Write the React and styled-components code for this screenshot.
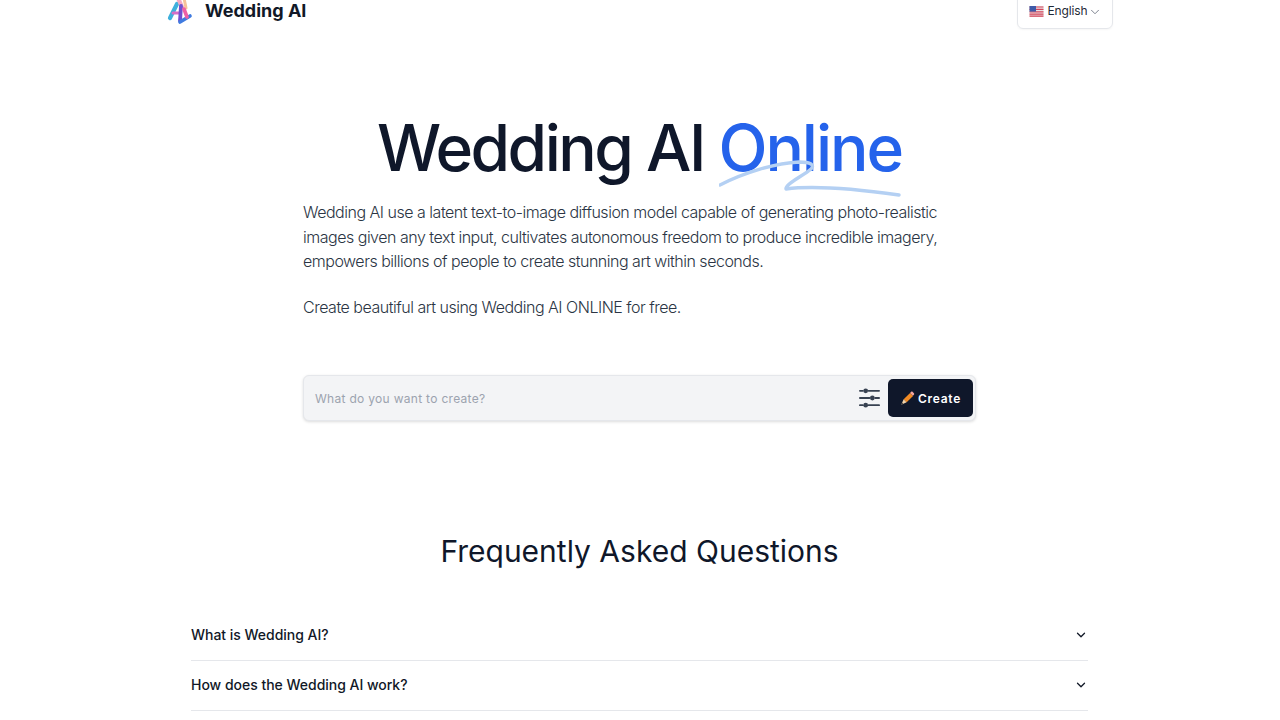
import React from "react";
import styled, { createGlobalStyle } from "styled-components";

const Global = createGlobalStyle`
  html, body { margin: 0; padding: 0; background: #fff; overflow: hidden; height: 720px; }
  body { font-family: Inter, "Liberation Sans", sans-serif; color: #0f172a; }
  * { box-sizing: border-box; }
`;

const Page = styled.div`
  width: 1279px;
  height: 720px;
  overflow: hidden;
  display: flex;
  flex-direction: column;
  align-items: center;
`;

const Header = styled.header`
  width: 947px;
  height: 29px;
  display: flex;
  justify-content: space-between;
  align-items: flex-start;
  flex-shrink: 0;
`;

const Brand = styled.div`
  display: flex;
  align-items: center;
  gap: 11px;
  height: 29px;
  margin-top: -4px;
`;

const BrandName = styled.span`
  font-size: 18px;
  font-weight: 700;
  color: #111827;
  line-height: 22px;
`;

const LangButton = styled.div`
  width: 96px;
  height: 36px;
  margin-top: -7px;
  border: 1px solid #e5e7eb;
  border-radius: 6px;
  display: flex;
  align-items: flex-end;
  justify-content: center;
  gap: 0;
  padding-bottom: 9px;
  padding-left: 1px;
  font-size: 12px;
  line-height: 16px;
  color: #1f2937;
  box-shadow: 0 1px 2px rgba(0, 0, 0, 0.04);
`;

const LangLabel = styled.span`
  display: flex;
  align-items: center;
  gap: 3px;
  letter-spacing: -0.1px;
`;

const Title = styled.h1`
  margin: 80px 0 0;
  font-size: 64px;
  line-height: 78px;
  font-weight: 500;
  letter-spacing: -2.5px;
  color: #0f172a;
  text-align: center;
  white-space: nowrap;
`;

const Accent = styled.span`
  position: relative;
  display: inline-block;
  color: #2563eb;
  letter-spacing: -2.05px;
`;

const Squiggle = styled.svg`
  position: absolute;
  left: 1px;
  top: 50px;
  width: 184px;
  height: 40px;
  pointer-events: none;
`;

const Intro = styled.div`
  width: 673px;
  margin-top: 13px;
  color: #2b3544;
  font-size: 16px;
  font-weight: 300;
  line-height: 24.5px;
  letter-spacing: -0.49px;
`;

const Para = styled.p`
  margin: 0 0 21px;
`;

const SearchBar = styled.div`
  width: 673px;
  height: 46px;
  margin-top: 35px;
  border: 1px solid #e5e7eb;
  border-radius: 6px;
  background: #f3f4f6;
  box-shadow: 0 1px 3px rgba(0, 0, 0, 0.14);
  display: flex;
  align-items: center;
  padding: 0 2px 0 11px;
`;

const Placeholder = styled.span`
  flex: 1;
  font-size: 12px;
  letter-spacing: 0.3px;
  color: #9ca3af;
`;

const CreateButton = styled.div`
  width: 85px;
  height: 38px;
  margin-left: 8px;
  border-radius: 5px;
  background: #0f172a;
  color: #fff;
  font-size: 12px;
  font-weight: 600;
  letter-spacing: 0.75px;
  display: flex;
  align-items: center;
  justify-content: center;
  gap: 3px;
`;

const FaqTitle = styled.h2`
  margin: 109px 0 0;
  font-size: 30px;
  line-height: 42px;
  font-weight: 400;
  color: #0f172a;
  text-align: center;
`;

const FaqList = styled.div`
  width: 897px;
  margin-top: 39px;
`;

const FaqRow = styled.div`
  height: 50px;
  border-bottom: 1px solid #e5e7eb;
  display: flex;
  align-items: center;
  justify-content: space-between;
  font-size: 14px;
  font-weight: 500;
  letter-spacing: -0.02px;
  color: #111827;
  padding: 0 0 2px 0;
`;

const Logo = () => (
  <svg width="28" height="29" viewBox="0 0 28 29" fill="none" strokeLinecap="round">
    <path d="M11 8 L4 22" stroke="#3fb0dc" strokeWidth="4.200" />
    <path d="M12 2 L16 11" stroke="#f5a9c4" strokeWidth="4.200" />
    <path d="M7 17 L14 17" stroke="#d56fc6" strokeWidth="3" />
    <path d="M15 10 L14 25" stroke="#6f4fd0" strokeWidth="3.800" />
    <path d="M14 26 L24 20" stroke="#3f7be0" strokeWidth="3.600" />
    <path d="M18 2 L20 12" stroke="#f6c29a" strokeWidth="3" />
    <path d="M18 13 L21 21" stroke="#ee5fa6" strokeWidth="3.600" />
  </svg>
);

const Flag = () => (
  <svg width="15" height="11" viewBox="0 0 14 11">
    <rect width="14" height="11" rx="1" fill="#e8e2e4" />
    <path d="M0 1h14M0 3.400h14M0 5.800h14M0 8.200h14M0 10.200h14" stroke="#d5455a" strokeWidth="1.200" />
    <rect width="6.500" height="5.600" fill="#3f5aa8" />
  </svg>
);

const Chevron = ({ size = 14, w = 1.5, color = "#6b7280" }) => (
  <svg width={size} height={size} viewBox="0 0 24 24" fill="none" stroke={color} strokeWidth={w} strokeLinecap="round" strokeLinejoin="round">
    <path d="m6 9 6 6 6-6" />
  </svg>
);

const Sliders = () => (
  <svg width="21" height="22" viewBox="0 0 22 22" fill="none" stroke="#374151" strokeWidth="2" strokeLinecap="round">
    <path d="M1 3.500h3M10 3.500h11M1 11h10M17 11h4M1 18.500h3M10 18.500h11" />
    <circle cx="7" cy="3.500" r="2.500" fill="#374151" stroke="none" />
    <circle cx="14" cy="11" r="2.500" fill="#374151" stroke="none" />
    <circle cx="7" cy="18.500" r="2.500" fill="#374151" stroke="none" />
  </svg>
);

const Pencil = () => (
  <svg width="15" height="15" viewBox="0 0 14 14">
    <path d="M3.400 7.800 9.400 1.800 12.200 4.600 6.200 10.600z" fill="#f08a24" />
    <path d="M9.400 1.800l1-1c.4-.4.9-.4 1.300 0l1.300 1.300c.4.4.4.9 0 1.300l-1 1z" fill="#f4a6a0" />
    <path d="M3.400 7.800 6.200 10.600 1.200 12.800z" fill="#f3d3a8" />
    <path d="M1.200 12.800 2 11 3 12z" fill="#333" />
  </svg>
);

export default function App() {
  return (
    <Page>
      <Global />
      <Header>
        <Brand>
          <Logo />
          <BrandName>Wedding AI</BrandName>
        </Brand>
        <LangButton>
          <LangLabel><Flag />English</LangLabel>
          <Chevron />
        </LangButton>
      </Header>
      <Title>
        Wedding AI{" "}
        <Accent>
          Online
          <Squiggle viewBox="0 0 184 40" fill="none">
            <path d="M1 26 C24 14 56 4 80 3 C92 3 96 6 92 10 C84 17 66 25 67 30 C90 27 130 29 180 36" stroke="#b4d0f3" strokeWidth="3.400" strokeLinecap="round" strokeLinejoin="round" />
          </Squiggle>
        </Accent>
      </Title>
      <Intro>
        <Para>
          Wedding AI use a latent text-to-image diffusion model capable of generating photo-realistic images given any text input, cultivates autonomous freedom to produce incredible imagery, empowers billions of people to create stunning art within seconds.
        </Para>
        <Para>Create beautiful art using Wedding AI ONLINE for free.</Para>
      </Intro>
      <SearchBar>
        <Placeholder>What do you want to create?</Placeholder>
        <Sliders />
        <CreateButton><Pencil />Create</CreateButton>
      </SearchBar>
      <FaqTitle>Frequently Asked Questions</FaqTitle>
      <FaqList>
        <FaqRow>What is Wedding AI?<Chevron size={14} w={2.2} color="#111827" /></FaqRow>
        <FaqRow>How does the Wedding AI work?<Chevron size={14} w={2.2} color="#111827" /></FaqRow>
      </FaqList>
    </Page>
  );
}
